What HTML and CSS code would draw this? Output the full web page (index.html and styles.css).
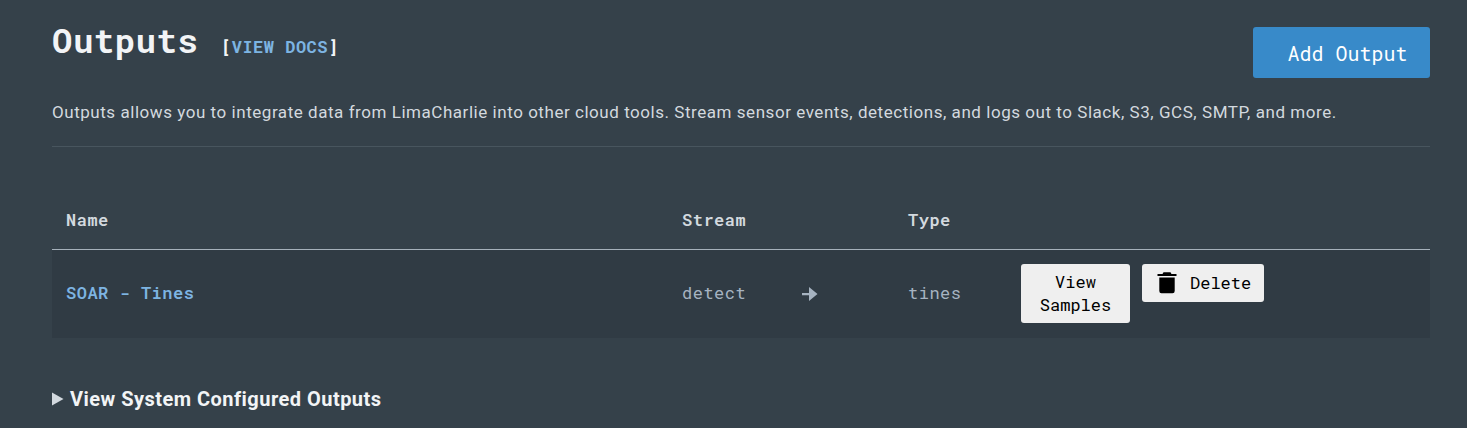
FILE: index.html
```html
<!DOCTYPE html>
<html lang="en">
<head>
<meta charset="utf-8">
<title>Outputs</title>
<link rel="stylesheet" href="styles.css">
</head>
<body>
<main class="page">
  <header class="header">
    <div class="heading">
      <h1 class="title">Outputs</h1>
      <span class="docs">[<a class="link">VIEW DOCS</a>]</span>
    </div>
    <button class="add">Add Output</button>
  </header>
  <p class="intro">Outputs allows you to integrate data from LimaCharlie into other cloud tools. Stream sensor events, detections, and logs out to Slack, S3, GCS, SMTP, and more.</p>
  <section class="table">
    <div class="row head"><span>Name</span><span>Stream</span><span></span><span>Type</span><span></span></div>
    <div class="row item">
      <a class="link name">SOAR - Tines</a>
      <span>detect</span>
      <svg class="arrow" width="16" height="16" viewBox="0 0 16 16"><path d="M0 7h7V1l8.500 7L7 15V9.200H0z"/></svg>
      <span>tines</span>
      <div class="actions">
        <button class="btn samples">View Samples</button>
        <button class="btn delete"><svg class="trash" width="20" height="22" viewBox="0 0 20 22"><path d="M.5 2h5L6.500 .3h7l1 1.700h5V4H.5zM2.300 5.500h15.400V19a2.200 2.200 0 0 1-2.200 2.200h-11A2.200 2.200 0 0 1 2.300 19z"/></svg><span class="delete-label">Delete</span></button>
      </div>
    </div>
  </section>
  <div class="system"><svg class="marker" width="12" height="14" viewBox="0 0 12 14"><path d="M0 .5 11.500 7 0 13.500z"/></svg><span>View System Configured Outputs</span></div>
</main>
</body>
</html>
```
FILE: styles.css
```css
* { box-sizing: border-box; }
body {
  margin: 0;
  background: #35414a;
  color: #d3d9df;
  font-family: Roboto, sans-serif;
}
.page { height: 428px; padding: 25px 37px 0 52px; overflow: hidden; }
.header { display: flex; justify-content: space-between; height: 65px; }
.heading {
  display: flex;
  align-items: baseline;
  height: 40px;
  font-family: "Roboto Mono", "DejaVu Sans Mono", monospace;
  font-weight: 700;
  color: #f2f4f6;
}
.title { width: 169px; margin: 0; font-size: 34px; line-height: 30px; letter-spacing: .5px; }
.docs { font-size: 17px; line-height: 24px; letter-spacing: .5px; }
.link { color: #7db4e2; }
.add {
  width: 177px;
  height: 51px;
  margin-top: 2px;
  padding: 1px 0 0 12px;
  border: 0;
  border-radius: 3px;
  background: #388ac9;
  color: #fff;
  font: 400 20px "Roboto Mono", "DejaVu Sans Mono", monospace;
}
.intro {
  height: 57px;
  margin: 0;
  padding-top: 10px;
  border-bottom: 1px solid #48555e;
  font-size: 17px;
  line-height: 24px;
  letter-spacing: .543px;
  white-space: nowrap;
}
.table {
  padding-top: 44px;
  font-family: "Roboto Mono", "DejaVu Sans Mono", monospace;
  font-size: 17px;
  letter-spacing: .5px;
}
.row {
  display: grid;
  grid-template-columns: 616px 120px 106px 113px 1fr;
  align-items: center;
  padding-left: 14px;
}
.head { height: 59px; padding-bottom: 2px; border-bottom: 1px solid #a6b1bb; font-weight: 600; }
.item { height: 88px; padding-bottom: 3px; background: #303b44; color: #a6b3c1; }
.name { font-weight: 600; }
.arrow { fill: #a6b3c1; margin-top: 3px; }
.actions { display: flex; align-items: flex-start; gap: 12px; margin-top: 2px; }
.btn {
  border: 0;
  border-radius: 3px;
  background: #efefef;
  color: #000;
  font: 400 17px/23px "Roboto Mono", "DejaVu Sans Mono", monospace;
}
.samples { width: 109px; height: 59px; padding: 0 12px 2px; }
.delete { display: flex; align-items: center; gap: 13px; width: 122px; height: 38px; padding: 0 0 0 15px; }
.delete-label { padding-bottom: 2px; }
.trash { fill: #000; }
.system {
  display: flex;
  align-items: center;
  gap: 6px;
  padding-top: 48px;
  color: #f2f4f6;
  font-size: 20px;
  font-weight: 700;
  line-height: 26px;
  letter-spacing: .47px;
}
.marker { fill: #d3d9df; }
```
